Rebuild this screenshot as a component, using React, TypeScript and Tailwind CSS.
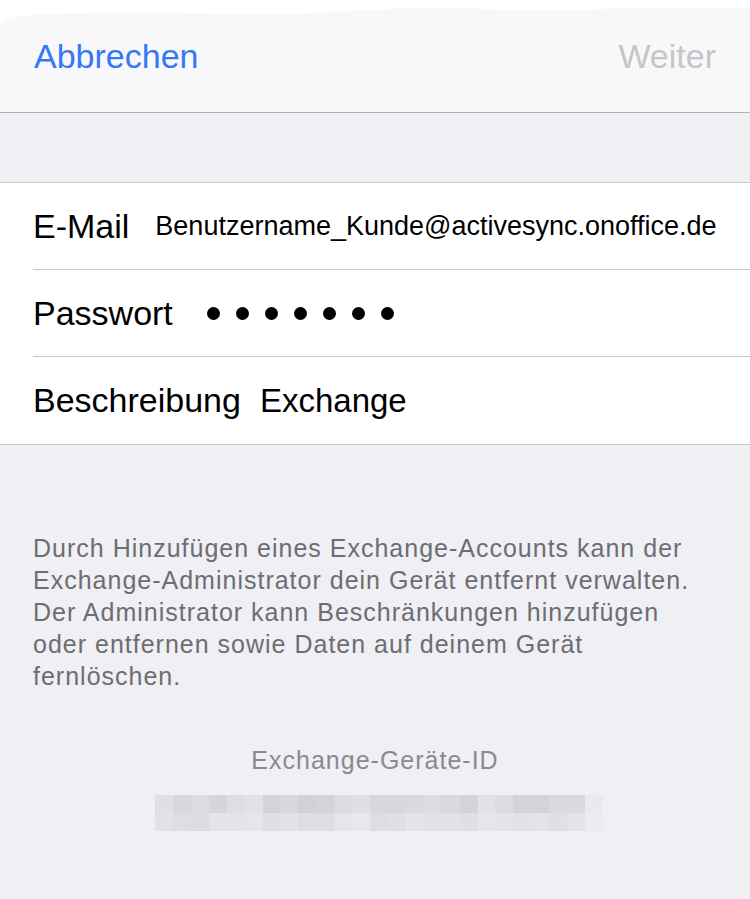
const mosaicTop = [
  "bg-[#e0e0e4]", "bg-[#d8d8dc]", "bg-[#dcdce0]", "bg-[#d6d6da]", "bg-[#dedee2]",
  "bg-[#e2e2e6]", "bg-[#d4d4d8]", "bg-[#d8d8dc]", "bg-[#d2d2d6]", "bg-[#d4d4d8]",
  "bg-[#dcdce0]", "bg-[#e0e0e4]", "bg-[#d8d8dc]", "bg-[#d8d8dc]", "bg-[#dadade]",
  "bg-[#dcdce0]", "bg-[#dadade]", "bg-[#d4d4d8]", "bg-[#e2e2e6]", "bg-[#dcdce0]",
  "bg-[#d4d4d8]", "bg-[#d4d4d8]", "bg-[#dadade]", "bg-[#dadade]", "bg-[#eaeaee]",
];

const mosaicBottom = [
  "bg-[#e2e2e6]", "bg-[#dedee2]", "bg-[#dcdce0]", "bg-[#e4e4e8]", "bg-[#e4e4e8]",
  "bg-[#e6e6ea]", "bg-[#e0e0e4]", "bg-[#e2e2e6]", "bg-[#dedee2]", "bg-[#dedee2]",
  "bg-[#e6e6ea]", "bg-[#e8e8ec]", "bg-[#dedee2]", "bg-[#e0e0e4]", "bg-[#e4e4e8]",
  "bg-[#e2e2e6]", "bg-[#e2e2e6]", "bg-[#e0e0e4]", "bg-[#e6e6ea]", "bg-[#e4e4e8]",
  "bg-[#e2e2e6]", "bg-[#e4e4e8]", "bg-[#e0e0e4]", "bg-[#e4e4e8]", "bg-[#ececf0]",
];

const Row = ({
  label,
  children,
  last,
}: {
  label: string;
  children: React.ReactNode;
  last?: boolean;
}) => {
  return (
    <div className="pl-[33px]">
      <div
        className={
          "flex h-[87px] items-center whitespace-nowrap " +
          (last ? "" : "border-b border-[#c8c7cc]")
        }
      >
        <span className="shrink-0 text-[34px] text-black">{label}</span>
        {children}
      </div>
    </div>
  );
};

export default function App() {
  return (
    <div className="relative flex min-h-[899px] w-[750px] flex-col overflow-hidden bg-[#efeff4] font-['Liberation_Sans',Arial,sans-serif]">
      {/* top of the screenshot was painted over */}
      <svg
        className="absolute left-0 top-0"
        width="750"
        height="28"
        viewBox="0 0 750 28"
      >
        <path
          d="M0 0 H750 V8 C700 10 650 6 600 9 C540 13 480 7 420 8 C360 9 300 16 240 14 C170 12 100 12 40 14 C20 15 8 20 0 24 Z"
          fill="#ffffff"
        />
      </svg>

      <div className="flex h-[113px] items-center justify-between border-b border-[#b2b2b5] bg-[#f8f8fa] px-[34px]">
        <span className="text-[34px] text-[#3478f6]">Abbrechen</span>
        <span className="text-[34px] text-[#c6c6c8]">Weiter</span>
      </div>

      <div className="h-[69px]" />

      <div className="border-y border-[#c8c7cc] bg-white">
        <Row label="E-Mail">
          <span className="ml-[26px] text-[27px] text-black">
            Benutzername_Kunde@activesync.onoffice.de
          </span>
        </Row>
        <Row label="Passwort">
          <div className="ml-[34px] flex gap-[16px]">
            {[0, 1, 2, 3, 4, 5, 6].map((i) => (
              <span key={i} className="block h-[13px] w-[13px] rounded-full bg-black" />
            ))}
          </div>
        </Row>
        <Row label="Beschreibung" last>
          <span className="ml-[19px] text-[33px] text-black">Exchange</span>
        </Row>
      </div>

      <p className="px-[33px] pt-[87px] text-[25px] leading-[32px] tracking-[1px] whitespace-nowrap text-[#6d6d72]">
        Durch Hinzufügen eines Exchange-Accounts kann der
        <br />
        Exchange-Administrator dein Gerät entfernt verwalten.
        <br />
        Der Administrator kann Beschränkungen hinzufügen
        <br />
        oder entfernen sowie Daten auf deinem Gerät
        <br />
        fernlöschen.
      </p>

      <p className="mt-[52px] text-center text-[25px] leading-[32px] tracking-[1px] text-[#8a8a8e]">
        Exchange-Geräte-ID
      </p>

      <div className="ml-[155px] mt-[19px] w-[448px]">
        <div className="grid h-[18px] grid-cols-[repeat(25,1fr)]">
          {mosaicTop.map((c, i) => (
            <div key={i} className={c} />
          ))}
        </div>
        <div className="grid h-[18px] grid-cols-[repeat(25,1fr)]">
          {mosaicBottom.map((c, i) => (
            <div key={i} className={c} />
          ))}
        </div>
      </div>
    </div>
  );
}
